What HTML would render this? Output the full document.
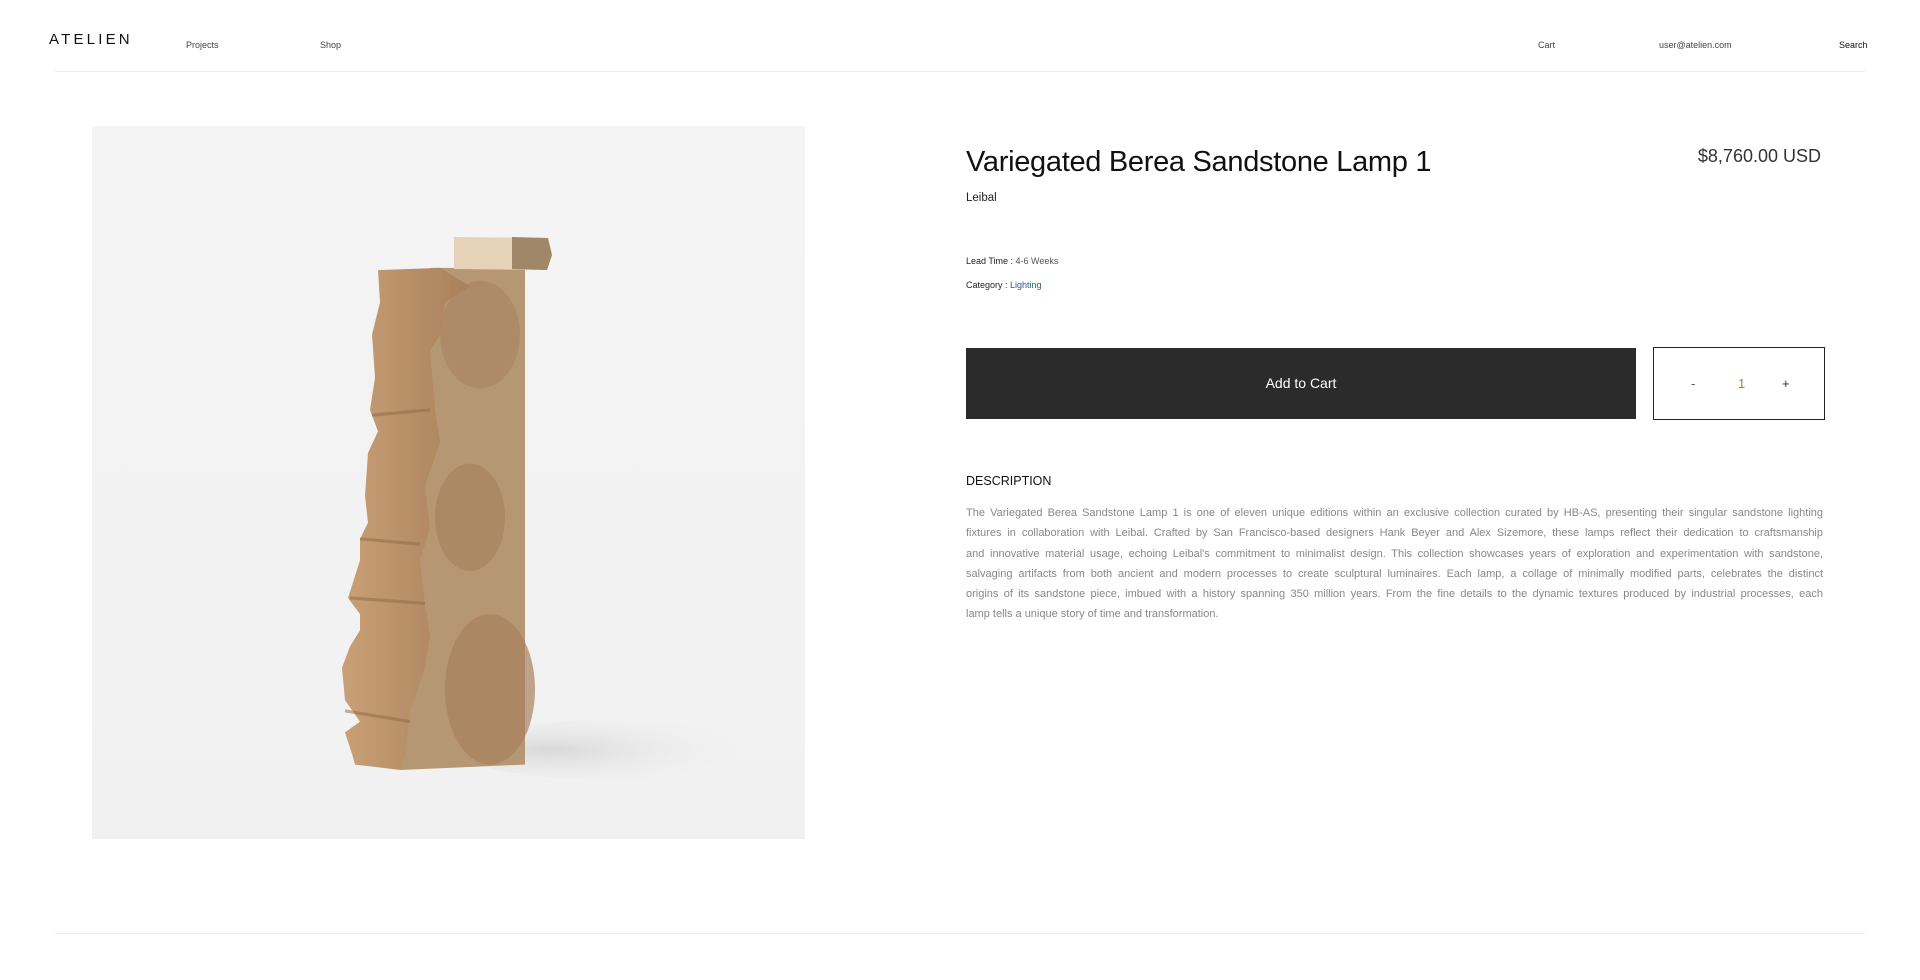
<!DOCTYPE html>
<html><head><meta charset="utf-8">
<style>
*{margin:0;padding:0;box-sizing:border-box}
body{width:1920px;height:980px;background:#fff;font-family:"Liberation Sans",sans-serif;position:relative;overflow:hidden;color:#222}
.a{position:absolute;white-space:nowrap}
.nav{font-size:9px;color:#444;top:40px}
.hr{position:absolute;left:55px;width:1810px;height:1px;background:#ececec}
.desc div{height:20.3px;text-align:justify;text-align-last:justify;white-space:nowrap;overflow:visible}
</style></head><body>
<div class="a" style="left:49px;top:31px;font-size:15px;letter-spacing:3.2px;color:#111">ATELIEN</div>
<div class="a nav" style="left:186px">Projects</div>
<div class="a nav" style="left:320px">Shop</div>
<div class="a nav" style="left:1538px">Cart</div>
<div class="a nav" style="left:1659px">user@atelien.com</div>
<div class="a nav" style="left:1839px;color:#111">Search</div>
<div class="hr" style="top:71px"></div>

<svg style="position:absolute;left:92px;top:126px" width="713" height="713" viewBox="92 126 713 713">
<defs>
<linearGradient id="bg" x1="0" y1="0" x2="0" y2="1"><stop offset="0" stop-color="#f4f4f4"/><stop offset="1" stop-color="#f1f1f1"/></linearGradient>
<radialGradient id="sh" cx="0.3" cy="0.5" r="0.7"><stop offset="0" stop-color="#d8d8d8"/><stop offset="1" stop-color="#f2f2f2" stop-opacity="0"/></radialGradient>
<linearGradient id="rg" x1="0" y1="0" x2="1" y2="0"><stop offset="0" stop-color="#c9a077"/><stop offset="1" stop-color="#a8805a"/></linearGradient>
</defs>
<rect x="92" y="126" width="713" height="713" fill="url(#bg)"/>
<ellipse cx="610" cy="750" rx="150" ry="30" fill="url(#sh)"/>
<g transform="translate(0,269) scale(1,1.075) translate(0,-269)">
<path d="M430 268 L525 268 L525 730 L400 735 L420 600 L405 420 Z" fill="#b69773"/>
<ellipse cx="490" cy="660" rx="45" ry="70" fill="#a7825d" opacity="0.7"/>
<ellipse cx="470" cy="500" rx="35" ry="50" fill="#a5805c" opacity="0.6"/>
<ellipse cx="480" cy="330" rx="40" ry="50" fill="#a98460" opacity="0.6"/>
<path d="M378 270 L440 268 L470 285 L445 300 L440 330 L430 345 L435 400 L440 430 L425 470 L430 510 L420 540 L425 580 L430 610 L425 640 L410 680 L405 720 L400 735 L355 730 L352 720 L345 700 L360 690 L345 670 L342 640 L350 620 L360 605 L360 590 L348 575 L360 540 L360 520 L368 505 L365 480 L368 440 L378 420 L370 400 L375 370 L372 330 L380 300 Z" fill="url(#rg)"/>
<path d="M372 405 L430 400 M350 575 L425 580 M360 520 L420 525 M345 680 L410 690" stroke="#8e6a48" stroke-width="3" opacity="0.5"/>
</g>
<path d="M454 237 L548 238 L552 255 L547 270 L454 269 Z" fill="#e6d2b6"/>
<path d="M512 237 L548 238 L552 255 L547 270 L512 269 Z" fill="#a08768"/>
</svg>

<div class="a" style="left:966px;top:146px;font-size:29px;color:#111;letter-spacing:-0.3px">Variegated Berea Sandstone Lamp 1</div>
<div class="a" style="left:1696px;top:146px;font-size:18px;color:#333;width:125px;text-align:right">$8,760.00 USD</div>
<div class="a" style="left:966px;top:192px;font-size:11.5px;color:#222">Leibal</div>
<div class="a" style="left:966px;top:256px;font-size:9px;color:#222">Lead Time : <span style="color:#555">4-6 Weeks</span></div>
<div class="a" style="left:966px;top:280px;font-size:9px;color:#222">Category : <span style="color:#2a5d7a">Lighting</span></div>
<div class="a" style="left:966px;top:348px;width:670px;height:71px;background:#2b2b2b;color:#fff;font-size:14px;line-height:71px;text-align:center">Add to Cart</div>
<div class="a" style="left:1653px;top:347px;width:172px;height:73px;border:1px solid #222;font-size:13px;line-height:71px">
<span class="a" style="left:37px;color:#555">-</span>
<span class="a" style="left:84px;color:#b27a3c">1</span>
<span class="a" style="left:128px;color:#333">+</span>
</div>
<div class="a" style="left:966px;top:474px;font-size:12.5px;color:#111">DESCRIPTION</div>
<div class="a desc" style="left:966px;top:507px;width:857px;font-size:11px;color:#888;white-space:normal">
<div>The Variegated Berea Sandstone Lamp 1 is one of eleven unique editions within an exclusive collection curated by HB-AS, presenting their singular sandstone lighting</div>
<div>fixtures in collaboration with Leibal. Crafted by San Francisco-based designers Hank Beyer and Alex Sizemore, these lamps reflect their dedication to craftsmanship</div>
<div>and innovative material usage, echoing Leibal's commitment to minimalist design. This collection showcases years of exploration and experimentation with sandstone,</div>
<div>salvaging artifacts from both ancient and modern processes to create sculptural luminaires. Each lamp, a collage of minimally modified parts, celebrates the distinct</div>
<div>origins of its sandstone piece, imbued with a history spanning 350 million years. From the fine details to the dynamic textures produced by industrial processes, each</div>
<div style="text-align-last:left">lamp tells a unique story of time and transformation.</div>
</div>
<div class="hr" style="top:933px"></div>
</body></html>
